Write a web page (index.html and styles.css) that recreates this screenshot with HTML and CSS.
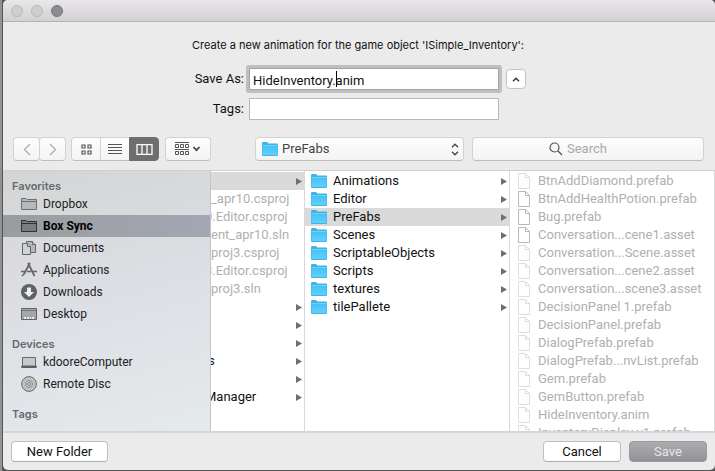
FILE: index.html
```html
<!DOCTYPE html>
<html lang="en">
<head>
<meta charset="utf-8">
<title>Save animation</title>
<link rel="stylesheet" href="styles.css">
</head>
<body>
<svg class="defs" aria-hidden="true">
  <linearGradient id="blue" x1="0" y1="0" x2="0" y2="1"><stop offset="0" stop-color="#43c0f0"/><stop offset="1" stop-color="#60d0ff"/></linearGradient>
  <symbol id="folder" viewBox="0 0 16 14"><path d="M0 1.5Q0 0 1 0H5L6.5 1.5H15Q16 1.500 16 2.500V13Q16 14 15 14H1Q0 14 0 13Z" fill="#3fb4e3"/><path d="M.5 3H15.500V13H.5Z" fill="url(#blue)"/><path d="M.5 3.500H15.500" stroke="#6fd2fa"/></symbol>
  <symbol id="file" viewBox="0 0 12 16"><path d="M.5.5H7.500L11.500 4.500V15.500H.5Z" fill="#fefefe" stroke="currentColor"/><path d="M7.500.5V4.500H11.500" fill="none" stroke="currentColor"/></symbol>
  <symbol id="arrow" viewBox="0 0 6 7"><path d="M0 0L6 3.500L0 7Z" fill="#6f6f6f"/></symbol>
  <symbol id="place" viewBox="0 0 16 12"><path d="M.5 11.500V.5H5L6 1.500H15.500V11.500Z" fill="currentColor" fill-opacity=".3" stroke="currentColor"/><path d="M.5 3.500H15.500" stroke="currentColor" fill="none"/></symbol>
</svg>
<main class="dialog">
  <header class="titlebar"><i class="light"></i><i class="light"></i><i class="light dark"></i></header>
  <section class="form">
    <p class="message">Create a new animation for the game object 'ISimple_Inventory':</p>
    <div class="field">
      <label for="name">Save As:</label>
      <div class="entry focus"><input id="name" type="text" value="HideInventory.anim"><i class="caret"></i></div>
      <button class="collapse" aria-label="Collapse"><svg width="8" height="5" viewBox="0 0 8 5"><path d="M1 4.300L4 1.200L7 4.300" fill="none" stroke="#333" stroke-width="1.400"/></svg></button>
    </div>
    <div class="field">
      <label for="tags">Tags:</label>
      <div class="entry"><input id="tags" type="text"></div>
    </div>
  </section>
  <nav class="toolbar">
    <div class="group">
      <button class="nav" aria-label="Back"><svg width="8" height="13" viewBox="0 0 8 13"><path d="M7 1L1.500 6.500L7 12" fill="none" stroke="#b5b5b5" stroke-width="1.500"/></svg></button>
      <button class="nav" aria-label="Forward"><svg width="8" height="13" viewBox="0 0 8 13"><path d="M1 1L6.500 6.500L1 12" fill="none" stroke="#b5b5b5" stroke-width="1.500"/></svg></button>
    </div>
    <div class="group views">
      <button class="view" aria-label="Icons"><svg width="11" height="11" viewBox="0 0 11 11"><path d="M1 1H4V4H1ZM7 1H10V4H7ZM1 7H4V10H1ZM7 7H10V10H7Z" fill="none" stroke="#555" stroke-width="1.200"/></svg></button>
      <button class="view" aria-label="List"><svg width="14" height="11" viewBox="0 0 14 11"><path d="M0 .5H14M0 3.500H14M0 6.500H14M0 9.500H14" stroke="#555"/></svg></button>
      <button class="view selected" aria-label="Columns"><svg width="17" height="11" viewBox="0 0 17 11"><path d="M1 .5H16V10.500H1ZM6 1V10M11 1V10" fill="none" stroke="#fff" stroke-width="1.300"/></svg></button>
    </div>
    <button class="arrange" aria-label="Arrange"><svg width="26" height="14" viewBox="0 0 26 14"><path d="M0 .5H14M0 7.500H14" stroke="#555"/><path d="M.5 2.500H3.500V5.500H.5ZM5.500 2.500H8.500V5.500H5.500ZM10.500 2.500H13.500V5.500H10.500ZM.5 9.500H3.500V12.500H.5ZM5.500 9.500H8.500V12.500H5.500ZM10.500 9.500H13.500V12.500H10.500Z" fill="none" stroke="#555"/><path d="M18.500 5L21.500 8.200L24.500 5" fill="none" stroke="#444" stroke-width="1.700"/></svg></button>
    <div class="popup">
      <svg class="popup-folder" width="16" height="14"><use href="#folder"/></svg>
      <select aria-label="Folder"><option>PreFabs</option></select>
      <svg class="updown" width="8" height="13" viewBox="0 0 8 13"><path d="M1 4.300L4 1.200L7 4.300M1 8.700L4 11.800L7 8.700" fill="none" stroke="#444" stroke-width="1.300"/></svg>
    </div>
    <div class="search">
      <svg width="14" height="14" viewBox="0 0 14 14"><circle cx="5.500" cy="5.500" r="4.500" fill="none" stroke="#555" stroke-width="1.200"/><path d="M8.800 8.800L13 13" stroke="#555" stroke-width="1.300"/></svg>
      <input type="search" placeholder="Search" aria-label="Search">
    </div>
  </nav>
  <section class="browser">
    <aside class="sidebar">
      <h2>Favorites</h2>
      <a href="#"><svg width="16" height="12"><use href="#place"/></svg>Dropbox</a>
      <a href="#" class="current"><svg width="16" height="12"><use href="#place"/></svg>Box Sync</a>
      <a href="#"><svg width="16" height="16" viewBox="0 0 16 16"><g fill="#d0d3d4" stroke="#666"><path d="M5.500 1.500H11.500L14.500 4.500V12.500H5.500Z" fill="#b5b8b9"/><path d="M11.500 1.500V4.500H14.500"/><path d="M1.500 3.500H6.500L9.500 6.500V14.500H1.500Z"/><path d="M6.500 3.500V6.500H9.500"/></g></svg>Documents</a>
      <a href="#"><svg width="16" height="16" viewBox="0 0 16 16"><path d="M9 1L3 12M7 1L13.500 14" fill="none" stroke="#666" stroke-width="1.800"/><path d="M0 9.500H4M6 9.500H10M12 9.500H16M1 14L3 12" stroke="#666" stroke-width="1.500"/></svg>Applications</a>
      <a href="#"><svg width="16" height="16" viewBox="0 0 16 16"><circle cx="8" cy="8" r="8" fill="#5f6162"/><path d="M6 3.500H10V8H13L8 13L3 8H6Z" fill="#eceeef"/></svg>Downloads</a>
      <a href="#"><svg width="16" height="12" viewBox="0 0 16 12"><path d="M.5.5H15.500V11.500H.5Z" fill="#a4a7a8" stroke="#606263"/><path d="M1 2.500H15" stroke="#777"/><path d="M3 9H5V11H3ZM6 9H8V11H6ZM9 9H10V11H9ZM11 9H13V11H11Z" fill="#eee"/></svg>Desktop</a>
      <h2>Devices</h2>
      <a href="#"><svg width="16" height="11" viewBox="0 0 16 11"><path d="M1.500.5H14.500V9H1.500Z" fill="#c5c9cb" stroke="#666"/><path d="M0 9H16V10L15 11H1L0 10Z" fill="#5d6061"/></svg>kdooreComputer</a>
      <a href="#"><svg width="16" height="16" viewBox="0 0 16 16"><circle cx="8" cy="8" r="7.400" fill="#bfc3c5" stroke="#686a6b"/><circle cx="8" cy="8" r="3.500" fill="#ccd0d2" stroke="#8a8d8f"/><circle cx="8" cy="8" r="1.500" fill="#e0e3e5" stroke="#777"/></svg>Remote Disc</a>
      <h2>Tags</h2>
    </aside>
    <ul class="column parent">
      <li class="active"><svg class="go"><use href="#arrow"/></svg></li>
      <li class="off">_apr10.csproj</li>
      <li class="off"><span class="cut">0.Editor.csproj</span></li>
      <li class="off">ent_apr10.sln</li>
      <li class="off">proj3.csproj</li>
      <li class="off"><span class="cut">3.Editor.csproj</span></li>
      <li class="off">proj3.sln</li>
      <li><svg class="go"><use href="#arrow"/></svg></li>
      <li><svg class="go"><use href="#arrow"/></svg></li>
      <li><svg class="go"><use href="#arrow"/></svg></li>
      <li><span class="nip">s</span><svg class="go"><use href="#arrow"/></svg></li>
      <li><svg class="go"><use href="#arrow"/></svg></li>
      <li><span class="cut">Manager</span><svg class="go"><use href="#arrow"/></svg></li>
    </ul>
    <ul class="column folders">
      <li><svg class="folder"><use href="#folder"/></svg>Animations<svg class="go"><use href="#arrow"/></svg></li>
      <li><svg class="folder"><use href="#folder"/></svg>Editor<svg class="go"><use href="#arrow"/></svg></li>
      <li class="active"><svg class="folder"><use href="#folder"/></svg>PreFabs<svg class="go"><use href="#arrow"/></svg></li>
      <li><svg class="folder"><use href="#folder"/></svg>Scenes<svg class="go"><use href="#arrow"/></svg></li>
      <li><svg class="folder"><use href="#folder"/></svg>ScriptableObjects<svg class="go"><use href="#arrow"/></svg></li>
      <li><svg class="folder"><use href="#folder"/></svg>Scripts<svg class="go"><use href="#arrow"/></svg></li>
      <li><svg class="folder"><use href="#folder"/></svg>textures<svg class="go"><use href="#arrow"/></svg></li>
      <li><svg class="folder"><use href="#folder"/></svg>tilePallete<svg class="go"><use href="#arrow"/></svg></li>
    </ul>
    <ul class="column files">
      <li class="off"><svg class="file"><use href="#file"/></svg>BtnAddDiamond.prefab</li>
      <li class="off"><svg class="file strong"><use href="#file"/></svg>BtnAddHealthPotion.prefab</li>
      <li class="off"><svg class="file strong"><use href="#file"/></svg>Bug.prefab</li>
      <li class="off"><svg class="file strong"><use href="#file"/></svg>Conversation...cene1.asset</li>
      <li class="off"><svg class="file"><use href="#file"/></svg>Conversation...Scene.asset</li>
      <li class="off"><svg class="file"><use href="#file"/></svg>Conversation...cene2.asset</li>
      <li class="off"><svg class="file"><use href="#file"/></svg>Conversation...scene3.asset</li>
      <li class="off"><svg class="file"><use href="#file"/></svg>DecisionPanel 1.prefab</li>
      <li class="off"><svg class="file"><use href="#file"/></svg>DecisionPanel.prefab</li>
      <li class="off"><svg class="file"><use href="#file"/></svg>DialogPrefab.prefab</li>
      <li class="off"><svg class="file"><use href="#file"/></svg>DialogPrefab...nvList.prefab</li>
      <li class="off"><svg class="file"><use href="#file"/></svg>Gem.prefab</li>
      <li class="off"><svg class="file"><use href="#file"/></svg>GemButton.prefab</li>
      <li class="off"><svg class="file"><use href="#file"/></svg>HideInventory.anim</li>
      <li class="off"><svg class="file"><use href="#file"/></svg>InventoryDisplay v1.prefab</li>
    </ul>
  </section>
  <footer class="actions">
    <button class="push wide">New Folder</button>
    <button class="push cancel">Cancel</button>
    <button class="push save">Save</button>
  </footer>
</main>
</body>
</html>
```
FILE: styles.css
```css
* { box-sizing: border-box; }
body {
  margin: 0;
  height: 100vh;
  padding: 0 0 1px 3px;
  overflow: hidden;
  background: linear-gradient(to right, #929292 2px, #555 2px);
  font: 13px/18px Roboto, "Liberation Sans", sans-serif;
  color: #111;
}
button, input, select { font: inherit; color: inherit; margin: 0; }
svg { display: block; flex: none; }
.defs { position: absolute; width: 0; height: 0; }
.dialog {
  height: 100%;
  display: flex;
  flex-direction: column;
  background: #ebebeb;
  border-radius: 5px;
  overflow: hidden;
}
.titlebar {
  height: 22px;
  flex: none;
  display: flex;
  align-items: center;
  gap: 8px;
  padding-left: 8px;
  background: linear-gradient(#e9e7ea, #d2d0d3);
  border-bottom: 1px solid #b3b2b4;
}
.light { width: 12px; height: 12px; border-radius: 50%; background: #cfcecf; border: 1px solid #b9b8b9; }
.light.dark { background: #8c8b90; border-color: #77767b; }
.form { flex: none; display: flex; flex-direction: column; align-items: center; padding: 14px 0 10px; }
.message { margin: 0 0 13px; width: 334px; font-family: Inter, sans-serif; font-size: 11px; white-space: nowrap; }
.field { width: 334px; height: 24px; margin-bottom: 6px; display: flex; align-items: center; }
.field label { width: 52px; text-align: right; white-space: nowrap; }
.entry { position: relative; width: 250px; margin: 0 7px 0 5px; height: 22px; }
.entry input { width: 100%; height: 22px; padding: 2px 3px 0; border: 1px solid #b9b9bb; background: #fff; outline: none; display: block; }
.focus input { border-color: #a3a2a5; box-shadow: 0 0 0 3px #bfbec1; border-radius: 1px; }
.caret { position: absolute; left: 87px; top: 3px; width: 1px; height: 16px; background: #000; }
.collapse { width: 20px; height: 20px; padding: 0; flex: none; display: flex; align-items: center; justify-content: center; background: #fff; border: 1px solid #c3c3c3; border-radius: 4px; }
.toolbar { flex: none; display: flex; height: 33px; padding: 0 11px 9px 10px; }
.group { display: flex; margin-right: 5px; }
.nav, .view, .arrange, .popup, .search {
  height: 24px;
  padding: 0;
  display: flex;
  align-items: center;
  justify-content: center;
  background: linear-gradient(#fdfdfd, #f4f4f4);
  border: 1px solid #d2d2d2;
  border-bottom-color: #bebebe;
  border-radius: 4px;
}
.nav { width: 27px; margin-right: -1px; }
.views { margin-right: 6px; }
.group + .group { margin-left: 1px; }
.view { width: 30px; border-radius: 0; margin-right: -1px; }
.view:first-child { border-radius: 4px 0 0 4px; }
.view.selected { margin: 0; background: #6e6e6e; border-color: #6e6e6e; border-radius: 0 4px 4px 0; }
.arrange { width: 46px; margin-right: 44px; }
.popup { width: 209px; position: relative; margin-right: 8px; color: #444; }
.popup select { width: 100%; height: 22px; padding: 0 20px 0 26px; border: 0; background: transparent; appearance: none; outline: none; }
.popup-folder { position: absolute; left: 6px; top: 4px; }
.updown { position: absolute; right: 4px; top: 5px; }
.search { flex: 1; justify-content: flex-start; padding-left: 76px; gap: 4px; min-width: 0; }
.search input { flex: 1; min-width: 0; border: 0; padding: 0; background: transparent; outline: none; appearance: none; }
.search input::placeholder { color: #a9a9a9; opacity: 1; }
.browser { flex: 1; min-height: 0; display: flex; border-top: 1px solid #cfcfcf; border-bottom: 2px solid #d5d5d5; background: #fff; overflow: hidden; }
.sidebar { width: 208px; flex: none; padding-top: 6px; border-right: 1px solid #c3c5cb; background: linear-gradient(165deg, #d3d5d5, #dcdee3 45%, #e5eaec); }
.sidebar h2 { margin: 0; height: 16px; padding: 1px 0 0 9px; font-family: Inter, sans-serif; font-size: 11px; line-height: 16px; font-weight: 600; color: #66686a; }
.sidebar a { display: flex; align-items: center; gap: 6px; height: 22px; padding-left: 18px; font-size: 12px; color: #222; text-decoration: none; }
.sidebar svg { color: #6d6f70; }
.sidebar a + h2 { margin-top: 10px; }
.sidebar .current { background: linear-gradient(to right, #9a9d9e, #a3a7b4); font-weight: 700; color: #000; }
.sidebar .current svg { color: #2e3032; }
.column { list-style: none; margin: 0; padding: 1px 0 0; border-right: 1px solid #d9d9d9; overflow: hidden; flex: none; }
.column li { height: 18px; display: flex; align-items: center; white-space: nowrap; }
.column .off { color: #b0b0b0; }
.column .active { background: #dadada; }
.parent { width: 94px; }
.cut { margin-left: -6px; }
.nip { margin-left: -3px; }
.folders { width: 205px; }
.folders li { padding-left: 6px; }
.files { flex: 1; min-width: 0; }
.files li { padding-left: 8px; }
.go { width: 6px; height: 7px; margin: 0 2px 0 auto; }
.folder { width: 16px; height: 14px; margin-right: 6px; }
.file { width: 12px; height: 16px; margin-right: 8px; color: #dedede; }
.file.strong { color: #b9b9b9; }
.actions { flex: none; height: 37px; display: flex; align-items: center; padding: 0 8px; }
.push { height: 21px; padding: 0; border: 1px solid #c0c0c0; border-bottom-color: #adadad; border-radius: 4px; background: #fff; width: 78px; }
.wide { width: 97px; margin-right: auto; }
.save { margin-left: 8px; background: linear-gradient(#adacb0, #929195); border-color: #9a999d; color: #e6e6e8; }
```
